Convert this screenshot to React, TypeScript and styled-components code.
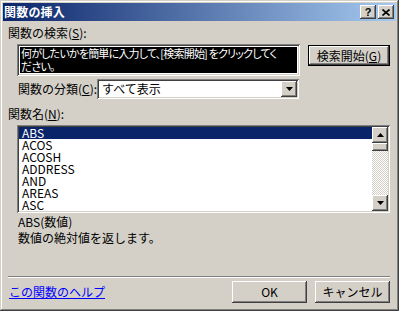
import styled, { createGlobalStyle } from "styled-components";

const GlobalStyle = createGlobalStyle`
  body {
    margin: 0;
    background: #d4d0c8;
  }
`;

const FONT = `"Noto Sans CJK JP", "Liberation Sans", sans-serif`;

// classic win9x bevels
const raised = `
  box-shadow: inset -1px -1px #404040, inset 1px 1px #ffffff,
    inset -2px -2px #808080, inset 2px 2px #d4d0c8;
`;
const sunken = `
  box-shadow: inset 1px 1px #808080, inset -1px -1px #ffffff,
    inset 2px 2px #404040, inset -2px -2px #d4d0c8;
`;

const Window = styled.div`
  width: 399px;
  height: 311px;
  box-sizing: border-box;
  padding: 3px;
  display: flex;
  flex-direction: column;
  background: #d4d0c8;
  font-family: ${FONT};
  font-size: 12px;
  color: #000;
  box-shadow: inset -1px -1px #404040, inset 1px 1px #d4d0c8,
    inset -2px -2px #808080, inset 2px 2px #ffffff;
`;

const TitleBar = styled.div`
  height: 18px;
  display: flex;
  align-items: center;
  padding: 0 2px 0 1px;
  background: linear-gradient(to right, #0a246a, #a6caf0);
`;

const Title = styled.span`
  color: #fff;
  font-weight: bold;
  font-size: 12px;
  line-height: 14px;
  letter-spacing: 0.2px;
  flex: 1;
`;

const CaptionButton = styled.div<{ $gap?: boolean }>`
  width: 16px;
  height: 14px;
  box-sizing: border-box;
  background: #d4d0c8;
  margin-left: ${(p) => (p.$gap ? "2px" : "0")};
  display: flex;
  align-items: center;
  justify-content: center;
  font-family: "Liberation Sans", sans-serif;
  font-weight: bold;
  font-size: 11px;
  line-height: 11px;
  ${raised}
`;

const Body = styled.div`
  flex: 1;
  display: flex;
  flex-direction: column;
  padding: 5px 6px 0 5px;
`;

const Label = styled.div<{ $indent?: number; $top?: number }>`
  line-height: 14px;
  height: 14px;
  margin-left: ${(p) => p.$indent ?? 0}px;
  margin-top: ${(p) => p.$top ?? 0}px;
  white-space: nowrap;
`;

const Key = styled.span`
  text-decoration: underline;
`;

const SearchRow = styled.div`
  display: flex;
  align-items: flex-start;
  margin-top: 4px;
`;

const SearchBox = styled.div`
  margin-left: 9px;
  width: 283px;
  height: 32px;
  box-sizing: border-box;
  padding: 3px;
  background: #fff;
  ${sunken}
`;

const SearchText = styled.div`
  height: 100%;
  background: #000;
  color: #fff;
  padding-left: 1px;
  font-size: 11px;
  line-height: 13px;
  white-space: nowrap;
  font-feature-settings: "palt";
  letter-spacing: -0.8px;
`;

const Button = styled.div<{ $default?: boolean; $w: number }>`
  width: ${(p) => p.$w}px;
  height: 21px;
  box-sizing: border-box;
  display: flex;
  align-items: center;
  justify-content: center;
  background: #d4d0c8;
  line-height: 14px;
  white-space: nowrap;
  ${(p) =>
    p.$default
      ? `box-shadow: inset 0 0 0 1px #000, inset -2px -2px #404040, inset 2px 2px #ffffff,
    inset -3px -3px #808080, inset 3px 3px #d4d0c8;`
      : raised}
`;

const SearchButton = styled(Button)`
  margin-left: auto;
  margin-top: 1px;
`;

const CategoryRow = styled.div`
  display: flex;
  align-items: center;
  margin-top: 3px;
  padding-left: 10px;
`;

const CategoryLabel = styled(Label)`
  width: 79px;
`;

const Select = styled.div`
  width: 202px;
  height: 20px;
  box-sizing: border-box;
  padding: 2px;
  display: flex;
  align-items: center;
  background: #fff;
  ${sunken}
`;

const SelectValue = styled.div`
  flex: 1;
  padding-left: 3px;
  line-height: 14px;
`;

const ArrowButton = styled.div`
  width: 16px;
  height: 16px;
  box-sizing: border-box;
  background: #d4d0c8;
  display: flex;
  align-items: center;
  justify-content: center;
  ${raised}
`;

const ListBox = styled.div`
  margin-top: 4px;
  margin-left: 9px;
  height: 88px;
  box-sizing: border-box;
  padding: 2px;
  display: flex;
  background: #fff;
  ${sunken}
`;

const Items = styled.div`
  flex: 1;
`;

const Item = styled.div<{ $selected?: boolean }>`
  height: 12px;
  line-height: 12px;
  padding-left: 3px;
  font-size: 12px;
  background: ${(p) => (p.$selected ? "#0a246a" : "transparent")};
  color: ${(p) => (p.$selected ? "#fff" : "#000")};
`;

const ScrollBar = styled.div`
  width: 16px;
  display: flex;
  flex-direction: column;
`;

const Thumb = styled.div`
  height: 8px;
  background: #d4d0c8;
  ${raised}
`;

const Track = styled.div`
  flex: 1;
  background-color: #fff;
  background-image: conic-gradient(
    #d4d0c8 25%,
    #fff 0 50%,
    #d4d0c8 0 75%,
    #fff 0
  );
  background-size: 2px 2px;
`;

const Description = styled.div`
  margin-top: 1px;
  margin-left: 10px;
  line-height: 16px;
`;

const Separator = styled.div`
  margin-top: 30px;
  height: 1px;
  background: #808080;
  border-bottom: 1px solid #fff;
`;

const Footer = styled.div`
  display: flex;
  align-items: center;
  margin-top: 3px;
  gap: 8px;
`;

const HelpLink = styled.a`
  color: #0000ff;
  text-decoration: underline;
  margin-left: 1px;
  margin-right: auto;
  line-height: 14px;
  cursor: pointer;
`;

const FooterButton = styled(Button)`
  height: 22px;
`;

function Triangle({ up }: { up?: boolean }) {
  return (
    <svg width="7" height="4" viewBox="0 0 7 4">
      <path d={up ? "M3.5 0 L7 4 L0 4 Z" : "M0 0 L7 0 L3.5 4 Z"} fill="#000" />
    </svg>
  );
}

const functions = ["ABS", "ACOS", "ACOSH", "ADDRESS", "AND", "AREAS", "ASC"];

export default function App() {
  return (
    <>
      <GlobalStyle />
      <Window>
        <TitleBar>
          <Title>関数の挿入</Title>
          <CaptionButton>?</CaptionButton>
          <CaptionButton $gap>
            <svg width="8" height="7" viewBox="0 0 8 7">
              <path d="M0.5 0.5 L7.5 6.5 M7.5 0.5 L0.5 6.5" stroke="#000" strokeWidth="1.6" />
            </svg>
          </CaptionButton>
        </TitleBar>
        <Body>
          <Label>
            関数の検索(<Key>S</Key>):
          </Label>
          <SearchRow>
            <SearchBox>
              <SearchText>
                何がしたいかを簡単に入力して、[検索開始] をクリックしてく
                <br />
                ださい。
              </SearchText>
            </SearchBox>
            <SearchButton $default $w={82}>
              検索開始(<Key>G</Key>)
            </SearchButton>
          </SearchRow>
          <CategoryRow>
            <CategoryLabel>
              関数の分類(<Key>C</Key>):
            </CategoryLabel>
            <Select>
              <SelectValue>すべて表示</SelectValue>
              <ArrowButton>
                <Triangle />
              </ArrowButton>
            </Select>
          </CategoryRow>
          <Label $top={8}>
            関数名(<Key>N</Key>):
          </Label>
          <ListBox>
            <Items>
              {functions.map((f, i) => (
                <Item key={f} $selected={i === 0}>
                  {f}
                </Item>
              ))}
            </Items>
            <ScrollBar>
              <ArrowButton>
                <Triangle up />
              </ArrowButton>
              <Thumb />
              <Track />
              <ArrowButton>
                <Triangle />
              </ArrowButton>
            </ScrollBar>
          </ListBox>
          <Description>
            ABS(数値)
            <br />
            数値の絶対値を返します。
          </Description>
          <Separator />
          <Footer>
            <HelpLink>この関数のヘルプ</HelpLink>
            <FooterButton $w={75}>OK</FooterButton>
            <FooterButton $w={75}>キャンセル</FooterButton>
          </Footer>
        </Body>
      </Window>
    </>
  );
}
